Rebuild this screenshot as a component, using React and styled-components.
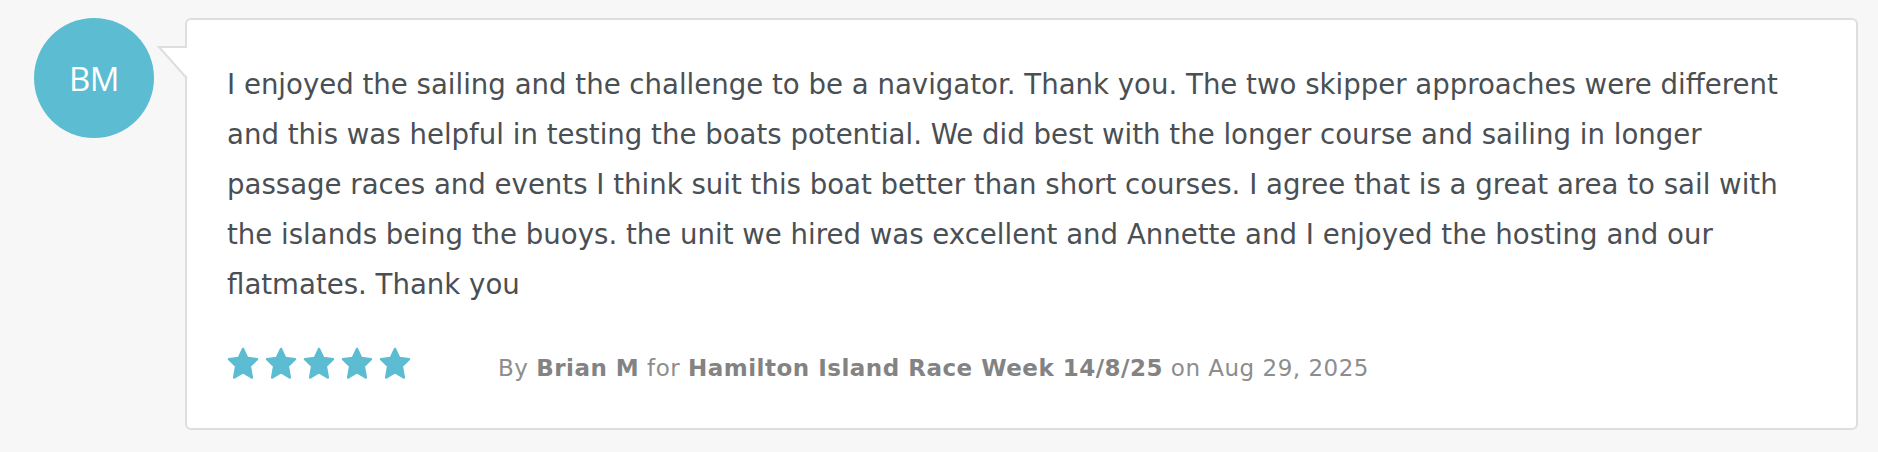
import React from "react";
import styled, { createGlobalStyle } from "styled-components";

const Global = createGlobalStyle`
  html, body { margin: 0; padding: 0; background: #f7f7f7; }
  body { font-family: "DejaVu Sans", "Open Sans", sans-serif; }
`;

const Page = styled.div`
  display: flex;
  align-items: flex-start;
  gap: 31px;
  padding: 18px 20px 22px 34px;
`;

const Avatar = styled.div`
  flex: 0 0 auto;
  width: 120px;
  height: 120px;
  border-radius: 50%;
  background: #5bbcd2;
  color: #ffffff;
  display: flex;
  align-items: center;
  justify-content: center;
  font-family: "Open Sans", sans-serif;
  font-size: 33px;
  font-weight: 400;
  letter-spacing: -0.5px;
`;

const Card = styled.div`
  position: relative;
  flex: 1 1 auto;
  background: #ffffff;
  border: 2px solid #dedede;
  border-radius: 6px;
  padding: 40px 40px 45px 40px;
  box-sizing: border-box;
`;

const Tail = styled.svg`
  position: absolute;
  left: -31px;
  top: 25px;
  overflow: visible;
`;

const Body = styled.p`
  margin: 0;
  max-width: 1578px;
  font-family: "DejaVu Sans", sans-serif;
  font-size: 27.6px;
  line-height: 50px;
  color: #4a4f54;
`;

const Footer = styled.div`
  display: flex;
  align-items: flex-start;
  margin-top: 33px;
  height: 40px;
`;

const Stars = styled.div`
  display: flex;
  gap: 6px;
  width: 271px;
  margin-top: 4px;
`;

const Meta = styled.div`
  font-family: "DejaVu Sans", sans-serif;
  font-size: 23px;
  letter-spacing: 0.5px;
  color: #8d8d8d;
  line-height: 40px;
  margin-top: 5px;
  white-space: nowrap;
  b { font-weight: 700; color: #838383; }
`;

const Star = () => (
  <svg width="32" height="33" viewBox="0 0 32 33">
    <polygon
      points="16,2 20.2,11 30,12.2 22.8,19 24.8,30.5 16,25.2 7.2,30.5 9.2,19 2,12.2 11.8,11"
      fill="#5bbcd2"
      stroke="#5bbcd2"
      strokeWidth="2.5"
      strokeLinejoin="round"
    />
  </svg>
);

export default function App() {
  return (
    <>
      <Global />
      <Page>
        <Avatar>BM</Avatar>
        <Card>
          <Tail width="32" height="36" viewBox="0 0 32 36">
            <polygon points="3,2 33,2 33,34" fill="#ffffff" />
            <polyline points="31,2 3,2 31,33.5" fill="none" stroke="#dedede" strokeWidth="2" />
          </Tail>
          <Body>
            I enjoyed the sailing and the challenge to be a navigator. Thank you. The two skipper approaches were different and this was helpful in testing the boats potential. We did best with the longer course and sailing in longer passage races and events I think suit this boat better than short courses. I agree that is a great area to sail with the islands being the buoys. the unit we hired was excellent and Annette and I enjoyed the hosting and our flatmates. Thank you
          </Body>
          <Footer>
            <Stars>
              {[0, 1, 2, 3, 4].map((i) => (
                <Star key={i} />
              ))}
            </Stars>
            <Meta>
              By <b>Brian M</b> for <b>Hamilton Island Race Week 14/8/25</b> on Aug 29, 2025
            </Meta>
          </Footer>
        </Card>
      </Page>
    </>
  );
}
